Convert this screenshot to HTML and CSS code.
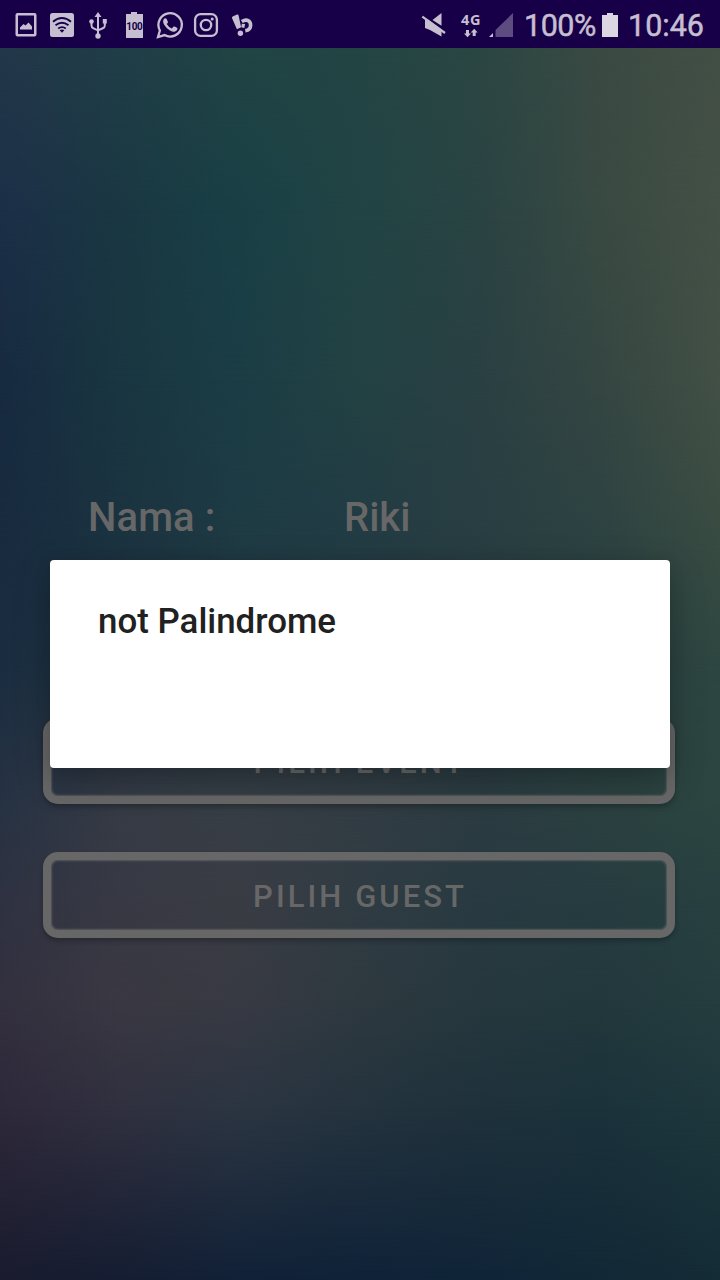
FILE: index.html
```html
<!DOCTYPE html>
<html lang="id">
<head>
<meta charset="utf-8">
<title>Palindrome</title>
<link rel="stylesheet" href="styles.css">
</head>
<body>
<div class="phone">
  <header class="status">
    <div class="notifications">
      <svg class="icon" viewBox="0 0 36 48"><path fill-rule="evenodd" d="M9.500 13h17q2 0 2 2v19.500q0 2-2 2h-17q-2 0-2-2V15q0-2 2-2zM10 15.500v18.500h16v-18.500z"/><path d="M12 29.500v-2l3.500-3.500 2 1.500 3-3L24 26.500v3z"/></svg>
      <svg class="icon" viewBox="0 0 36 48"><rect x="6" y="13" width="24" height="24" rx="2.500"/><g class="cut"><path d="M9 21.700q9-7.200 18 0M11.500 25.200q6.500-5 13 0M14.200 28.500q3.800-2.800 7.600 0"/></g><path class="cut-fill" d="M15.700 30.300q2.300-1.500 4.600 0L18 32.700z"/></svg>
      <svg class="icon" viewBox="0 0 36 48"><path d="M18 12l3.500 5h-7zM22.800 19h4v4.500h-4z"/><circle cx="11.500" cy="21.500" r="2.300"/><circle cx="18" cy="36" r="2.700"/><path class="line" d="M18 15v20M11.500 22v3.500q0 2 2 2.800l4.500 2M24.800 22v3.500q0 2-2 2.800l-4.800 2"/></svg>
      <svg class="icon" viewBox="0 0 36 48"><path d="M15 12h6v2h6v24H10V14h5z"/><text class="level" x="18.400" y="30.200" text-anchor="middle">100</text></svg>
      <svg class="icon" viewBox="0 0 36 48"><path class="line thick" d="M6 37l1.900-6.500A11.700 11.700 0 1 1 12.500 35.100z"/><path d="M11.800 19q1.500-1.500 2.700-.2l1.500 3.100q0 1-1.300 2.200 1.900 3.300 5.100 4.500l1.800-2q.8-.4 3.700 1.400.6 2.400-2.300 3.500-3.500 1-8.300-3.500-5.200-5.300-2.900-9z"/></svg>
      <svg class="icon" viewBox="0 0 36 48"><rect class="line thick" x="7.100" y="14.100" width="21.800" height="21.800" rx="5.500"/><circle class="line thick" cx="18" cy="25" r="5.200"/><circle cx="24.200" cy="19" r="1.500"/></svg>
      <svg class="icon" viewBox="0 0 36 48"><path d="M8.700 16.400l4.400-1.800q1.200-.4 1.500.8l2.500 11.900-4.200 1.900-4.900-11.100q-.4-1.200.7-1.700z"/><circle cx="16.400" cy="33.200" r="2.700"/><path class="line bulb" d="M17.800 21.500C23 18.500 26.600 21 26.600 25.200 26.600 28.500 24.500 30.300 21.300 30.800"/><path d="M17.800 23.800l3.300.2-.8 4-3-.7z"/></svg>
    </div>
    <div class="system">
      <svg class="mute" viewBox="0 0 36 48"><path d="M16.500 20l9-7v12.800zM9 19.500h3l13.500 10v7L14 30l-5-2z"/><path class="line slash" d="M6.300 16.700L29 33"/></svg>
      <div class="network"><span>4G</span>
        <svg viewBox="0 0 16 10"><path d="M3 2h3v3.500h2L4.500 9.200 1 5.500h2zM9.700 8h3V4.500h2L11.200.7 7.700 4.500h2z"/></svg>
      </div>
      <svg class="signal" viewBox="0 0 25 48"><path class="faint" d="M6.500 37V30L24 13v24z"/><path d="M0 37l4-4v4z"/></svg>
      <span class="percent">100%</span>
      <svg class="battery" viewBox="0 0 16 48"><path d="M5 13h6v2h5v22H0V15h5z"/></svg>
      <span class="clock">10:46</span>
    </div>
  </header>
  <main class="screen">
    <div class="wash r1"></div><div class="wash r2"></div><div class="wash r3"></div>
    <div class="wash r4"></div><div class="wash r5"></div><div class="wash r6"></div>
    <div class="wash r7"></div><div class="wash r8"></div><div class="wash r9"></div>
    <div class="wash r10"></div>
    <div class="content">
      <div class="name-row"><span class="name-label">Nama :</span><span>Riki</span></div>
      <div class="buttons">
        <div class="button">PILIH EVENT</div>
        <div class="button">PILIH GUEST</div>
      </div>
    </div>
  </main>
  <div class="dialog" role="dialog">not Palindrome</div>
</div>
</body>
</html>
```
FILE: styles.css
```css
* { box-sizing: border-box; }
body { margin: 0; font-family: Roboto, sans-serif; }
.phone { position: relative; width: 720px; height: 1280px; overflow: hidden; display: flex; flex-direction: column; }

.status { height: 48px; background: #180048; color: #c5bfd1; display: flex; justify-content: space-between; padding: 0 16px 0 8px; }
.status svg { display: block; fill: #c5bfd1; }
.notifications, .system { display: flex; align-items: center; }
.icon { width: 36px; height: 48px; }
.status .cut path { fill: none; stroke: #180048; stroke-width: 1.9; }
.status .cut-fill { fill: #180048; }
.status .line { fill: none; stroke: #c5bfd1; stroke-width: 2; }
.status .thick { stroke-width: 2.3; }
.status .bulb { stroke-width: 3.6; }
.status .slash { stroke-width: 2.2; }
.status .level { fill: #180048; font: 700 10px Roboto, sans-serif; letter-spacing: -.3px; }
.mute { width: 36px; height: 48px; }
.network { width: 24px; height: 48px; margin-left: 7px; padding-top: 11px; display: flex; flex-direction: column; align-items: center; font: 700 14.500px/17px "Noto Sans", sans-serif; letter-spacing: .5px; }
.network svg { width: 16px; height: 10px; }
.signal { width: 25px; height: 48px; margin-left: 6px; }
.status .signal .faint { fill: #5c4c80; }
.percent, .clock { font-size: 30.500px; line-height: 48px; white-space: nowrap; padding-top: 2px; height: 48px; font-weight: 400; -webkit-text-stroke: .5px #c5bfd1; }
.percent { width: 72px; margin-left: 10px; letter-spacing: -.5px; }
.battery { width: 16px; height: 48px; margin-left: 6px; }
.status .battery { fill: #dbd7e2; }
.clock { width: 76px; margin-left: 10px; }

/* Every wash is a row of colours that fades in from the row above it. */
.screen { flex: 1; display: grid; }
.wash, .content { grid-area: 1 / 1; }
.r1 { background: linear-gradient(90deg, #233749, #203e48, #214444, #234544, #2b4643, #3a4a43, #434f45); }
.r2 { background: linear-gradient(90deg, #1c2f48, #1a3742, #194046, #224444, #2a4343, #394a42, #445045); mask-image: linear-gradient(transparent 0, #000 162px); }
.r3 { background: linear-gradient(90deg, #172a40, #193641, #1b3d45, #234243, #2a4043, #354642, #425045); mask-image: linear-gradient(transparent 162px, #000 332px); }
.r4 { background: linear-gradient(90deg, #182b3f, #1b3340, #1e3b44, #223c44, #293e42, #2e4342, #3a4c42); mask-image: linear-gradient(transparent 332px, #000 472px); }
.r5 { background: linear-gradient(90deg, #1a2d40, #203442, #263942, #283c43, #293d42, #2a4141, #2e4641); mask-image: linear-gradient(transparent 472px, #000 612px); }
.r6 { background: linear-gradient(90deg, #273243, #363b45, #373e45, #323c43, #2b3b41, #2b4040, #2b4540); mask-image: linear-gradient(transparent 612px, #000 762px); }
.r7 { background: linear-gradient(90deg, #2f3242, #383944, #3a3c44, #303c43, #293a42, #263c40, #284040); mask-image: linear-gradient(transparent 762px, #000 852px); }
.r8 { background: linear-gradient(90deg, #33303f, #3a3842, #383a43, #2e393f, #26383e, #22383c, #263d3f); mask-image: linear-gradient(transparent 852px, #000 952px); }
.r9 { background: linear-gradient(90deg, #2e283a, #30303f, #2b3542, #24333e, #1f313b, #1b323b, #1d373c); mask-image: linear-gradient(transparent 952px, #000 1062px); }
.r10 { background: linear-gradient(90deg, #191b2e, #151d32, #112137, #0f2238, #102438, #122836, #142c36); mask-image: linear-gradient(transparent 1062px, #000 1232px); }

.content { z-index: 1; padding: 446px 45px 0 43px; color: #676767; display: flex; flex-direction: column; }
.name-row { display: flex; height: 47px; padding-left: 45px; font-size: 40px; line-height: 47px; font-weight: 500; }
.name-label { width: 256px; letter-spacing: .1px; }
.buttons { display: flex; flex-direction: column; gap: 48px; margin-top: 177px; }
.button { height: 86px; border: 8px solid #676767; border-radius: 15px; display: flex; align-items: center; justify-content: center; padding: 3px 0 0 2px; font-size: 31px; line-height: 36px; font-weight: 500; letter-spacing: 3.050px; box-shadow: 0 3px 5px rgba(0,0,0,.25), inset 0 0 2px 1px rgba(103,103,103,.75); }
.dialog { position: absolute; z-index: 2; left: 50px; top: 560px; width: 620px; height: 208px; padding: 41px 48px; background: #fff; border-radius: 4px; color: #212121; font-size: 34.900px; line-height: 42px; font-weight: 500; box-shadow: 0 12px 36px rgba(0,0,0,.22), 0 2px 16px rgba(0,0,0,.1); }
```
